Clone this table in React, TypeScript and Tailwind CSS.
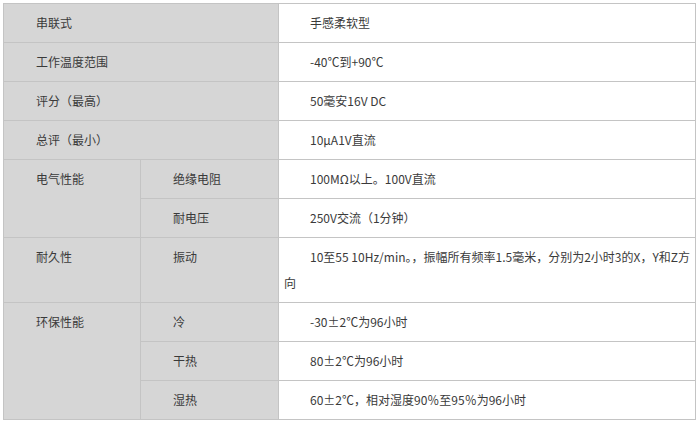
type Row = {
  a?: { text: string; rowSpan?: number; colSpan?: number };
  b?: string;
  value: React.ReactNode;
};

const rows: Row[] = [
  { a: { text: "串联式", colSpan: 2 }, value: "手感柔软型" },
  { a: { text: "工作温度范围", colSpan: 2 }, value: "-40℃到+90℃" },
  { a: { text: "评分（最高）", colSpan: 2 }, value: "50毫安16V DC" },
  { a: { text: "总评（最小）", colSpan: 2 }, value: "10μA1V直流" },
  { a: { text: "电气性能", rowSpan: 2 }, b: "绝缘电阻", value: "100MΩ以上。100V直流" },
  { b: "耐电压", value: "250V交流（1分钟）" },
  {
    a: { text: "耐久性" },
    b: "振动",
    value: (
      <>
        <span className="whitespace-nowrap">10至55 10Hz/min。，振幅所有频率1.5毫米，分别为2小时3的X，Y和Z方</span>
        <br />向
      </>
    ),
  },
  { a: { text: "环保性能", rowSpan: 3 }, b: "冷", value: "-30±2℃为96小时" },
  { b: "干热", value: "80±2℃为96小时" },
  { b: "湿热", value: "60±2℃，相对湿度90％至95％为96小时" },
];

const cell = "border border-[#c4c4c4] pt-[6px] pb-[6px] pl-[5px] pr-0 align-top";

export default function App() {
  return (
    <div className="w-[698px] h-[424px] bg-white pt-[3px] pl-[3px]">
      <table
        className="table-fixed border-collapse w-[693px] text-[12px] leading-[26px] text-[#3a3a3a]"
        style={{ fontFamily: '"Noto Sans CJK SC", "Noto Sans", sans-serif' }}
      >
        <colgroup>
          <col className="w-[137px]" />
          <col className="w-[138px]" />
          <col />
        </colgroup>
        <tbody>
          {rows.map((r, i) => (
            <tr key={i}>
              {r.a && (
                <td rowSpan={r.a.rowSpan} colSpan={r.a.colSpan} className={`${cell} bg-[#d6d6d6] indent-[27px]`}>
                  {r.a.text}
                </td>
              )}
              {r.b && <td className={`${cell} bg-[#d6d6d6] indent-[27px]`}>{r.b}</td>}
              <td className={`${cell} bg-white indent-[26px]`}>{r.value}</td>
            </tr>
          ))}
        </tbody>
      </table>
    </div>
  );
}
